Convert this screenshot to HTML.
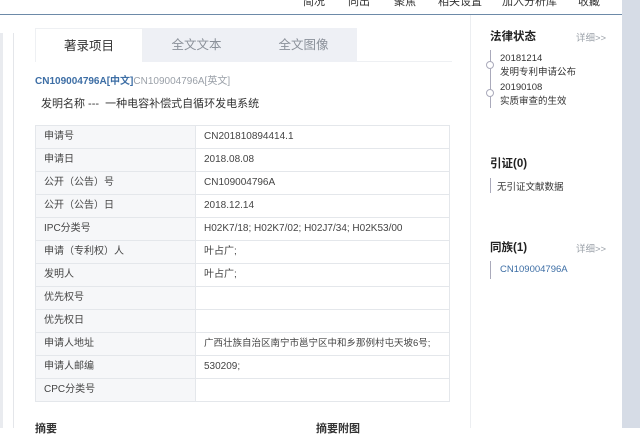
<!DOCTYPE html><html><head><meta charset="utf-8"><style>
*{margin:0;padding:0;box-sizing:border-box}
body{width:640px;height:428px;overflow:hidden;background:#fff;font-family:"Liberation Sans","Noto Sans CJK SC",sans-serif;position:relative;color:#333}
.a{position:absolute}
.nav span{position:absolute;top:-7px;font-size:11px;color:#333}
.tb{position:absolute;left:35px;top:125px;width:415px;border-top:1px solid #e4e7eb;border-left:1px solid #e4e7eb}
.r{display:flex;height:23px;border-bottom:1px solid #e4e7eb}
.r div{font-size:10px;line-height:22px;padding-left:8px;color:#444;white-space:nowrap;border-right:1px solid #e4e7eb}
.r .l{background:#f6f7f9;width:160px;flex:none}
.r .v{flex:1}
.tab{position:absolute;top:28px;height:34px;line-height:34px;text-align:center;font-size:12.5px}
</style></head><body>
<div class="nav">
<span style="left:303px">简况</span><span style="left:348px">同出</span><span style="left:394px">聚焦</span><span style="left:438px">相关设置</span><span style="left:502px">加入分析库</span><span style="left:578px">收藏</span>
</div>
<div class="a" style="left:0;top:14px;width:622px;height:1px;background:#6d8aa8"></div>
<div class="a" style="left:622px;top:0;width:18px;height:428px;background:#d6dce6"></div>
<div class="a" style="left:0;top:33px;width:3px;height:395px;background:#e9ebef"></div>
<div class="a" style="left:13px;top:33px;width:1px;height:395px;background:#e4e6ea"></div>
<div class="a" style="left:470px;top:15px;width:1px;height:413px;background:#eceef1"></div>
<div class="a" style="left:35px;top:61px;width:417px;height:1px;background:#eef0f3"></div>
<div class="tab" style="left:35px;width:108px;background:#fff;color:#333;border:1px solid #eef0f3;border-bottom:none">著录项目</div>
<div class="tab" style="left:143px;width:107px;background:#eef0f5;color:#8a9099">全文文本</div>
<div class="tab" style="left:250px;width:107px;background:#eef0f5;color:#8a9099">全文图像</div>
<div class="a" style="left:35px;top:72px;font-size:10px;font-weight:bold;color:#3d6ea5">CN109004796A[中文]<span style="font-weight:normal;color:#9aa0a8">CN109004796A[英文]</span></div>
<div class="a" style="left:41px;top:95px;font-size:11px;color:#333">发明名称 ---&nbsp; 一种电容补偿式自循环发电系统</div>
<div class="tb">
<div class="r"><div class="l">申请号</div><div class="v">CN201810894414.1</div></div>
<div class="r"><div class="l">申请日</div><div class="v">2018.08.08</div></div>
<div class="r"><div class="l">公开（公告）号</div><div class="v">CN109004796A</div></div>
<div class="r"><div class="l">公开（公告）日</div><div class="v">2018.12.14</div></div>
<div class="r"><div class="l">IPC分类号</div><div class="v">H02K7/18; H02K7/02; H02J7/34; H02K53/00</div></div>
<div class="r"><div class="l">申请（专利权）人</div><div class="v">叶占广;</div></div>
<div class="r"><div class="l">发明人</div><div class="v">叶占广;</div></div>
<div class="r"><div class="l">优先权号</div><div class="v"></div></div>
<div class="r"><div class="l">优先权日</div><div class="v"></div></div>
<div class="r"><div class="l">申请人地址</div><div class="v" style="font-size:9.5px">广西壮族自治区南宁市邕宁区中和乡那例村屯天坡6号;</div></div>
<div class="r"><div class="l">申请人邮编</div><div class="v">530209;</div></div>
<div class="r"><div class="l">CPC分类号</div><div class="v"></div></div>
</div>
<div class="a" style="left:35px;top:420px;font-size:11px;font-weight:bold">摘要</div>
<div class="a" style="left:316px;top:420px;font-size:11px;font-weight:bold">摘要附图</div>
<div class="a" style="left:490px;top:28px;font-size:11.5px;font-weight:bold;color:#222">法律状态</div>
<div class="a" style="left:576px;top:30px;font-size:9.5px;color:#9aa0a8">详细>></div>
<div class="a" style="left:490px;top:50px;width:1px;height:58px;background:#aab"></div>
<div class="a" style="left:486px;top:61px;width:8px;height:8px;border:1px solid #aab;border-radius:50%;background:#fff"></div>
<div class="a" style="left:486px;top:89px;width:8px;height:8px;border:1px solid #aab;border-radius:50%;background:#fff"></div>
<div class="a" style="left:500px;top:52px;font-size:9.5px;line-height:14px;color:#333">20181214<br>发明专利申请公布</div>
<div class="a" style="left:500px;top:81px;font-size:9.5px;line-height:14px;color:#333">20190108<br>实质审查的生效</div>
<div class="a" style="left:490px;top:155px;font-size:11.5px;font-weight:bold;color:#222">引证(0)</div>
<div class="a" style="left:490px;top:178px;width:1px;height:15px;background:#aab"></div>
<div class="a" style="left:497px;top:179px;font-size:9.5px;color:#333">无引证文献数据</div>
<div class="a" style="left:490px;top:239px;font-size:11.5px;font-weight:bold;color:#222">同族(1)</div>
<div class="a" style="left:576px;top:241px;font-size:9.5px;color:#9aa0a8">详细>></div>
<div class="a" style="left:490px;top:261px;width:1px;height:18px;background:#aab"></div>
<div class="a" style="left:500px;top:264px;font-size:9.5px;color:#3d6ea5">CN109004796A</div>
</body></html>
